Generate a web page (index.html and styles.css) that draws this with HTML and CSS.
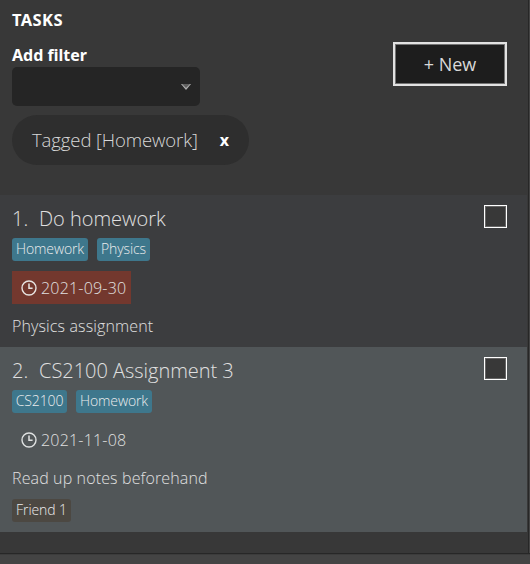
FILE: index.html
```html
<!DOCTYPE html>
<html lang="en">
<head>
<meta charset="utf-8">
<title>Tasks</title>
<link rel="stylesheet" href="styles.css">
</head>
<body>
<div class="app">
  <main class="panel">
    <header class="top">
      <div class="filters">
        <h1 class="heading main-heading">TASKS</h1>
        <div class="heading label">Add filter</div>
        <div class="combo"><svg width="10" height="6" viewBox="0 0 10 6"><path d="M0 0h10L5 6z" fill="#b0b0b0"/><path d="M1 0h8L5 4z" fill="#606060"/></svg></div>
        <div class="chip"><span class="chip-text">Tagged [Homework]</span><b class="close">x</b></div>
      </div>
      <button class="new"><span>+ New</span></button>
    </header>
    <section class="task">
      <div class="body">
        <div class="title"><span class="num">1.</span><span>Do homework</span></div>
        <div class="tags"><span class="tag w76">Homework</span><span class="tag w53">Physics</span></div>
        <div class="date overdue"><svg width="16" height="16" viewBox="0 0 16 16" fill="none" stroke="#e8e4e2"><circle cx="8" cy="8" r="7" stroke-width="1.4"/><path d="M8 3.5V8.2h3.6" stroke-width="1.5"/></svg><span>2021-09-30</span></div>
        <div class="desc">Physics assignment</div>
      </div>
      <span class="check"></span>
    </section>
    <section class="task alt">
      <div class="body">
        <div class="title"><span class="num">2.</span><span>CS2100 Assignment 3</span></div>
        <div class="tags"><span class="tag w55">CS2100</span><span class="tag w76">Homework</span></div>
        <div class="date"><svg width="16" height="16" viewBox="0 0 16 16" fill="none" stroke="#dfe1e1"><circle cx="8" cy="8" r="7" stroke-width="1.4"/><path d="M8 3.5V8.2h3.6" stroke-width="1.5"/></svg><span>2021-11-08</span></div>
        <div class="desc">Read up notes beforehand</div>
        <div class="tags people"><span class="tag friend">Friend 1</span></div>
      </div>
      <span class="check"></span>
    </section>
  </main>
  <footer class="status"></footer>
</div>
</body>
</html>
```
FILE: styles.css
```css
* { box-sizing: border-box; }
body {
  margin: 0;
  background: #383838;
  color: #e0e0e0;
  font-family: "Open Sans", sans-serif;
  font-weight: 300;
}
svg { display: block; flex: none; }
.app { width: 530px; height: 564px; display: flex; flex-direction: column; overflow: hidden; }
.panel {
  height: 553px;
  margin-right: 1px;
  border-right: 1px solid #272727;
  box-shadow: 1px 0 #444;
  padding-right: 1px;
}
.status { height: 11px; background: #444; border-top: 1px solid #272727; box-shadow: inset 0 1px #3c3c3c; }
.top { height: 195px; padding: 9px 20px 0 12px; display: flex; justify-content: space-between; align-items: flex-start; }
.heading { margin: 0; font-family: "Noto Sans", sans-serif; font-size: 16px; line-height: 22px; font-weight: 700; color: #fff; white-space: nowrap; }
.main-heading { font-size: 16.5px; letter-spacing: 0.4px; }
.label { margin-top: 13px; }
.combo {
  width: 188px; height: 39px; margin-top: 1px;
  padding-right: 9px;
  border-radius: 5px;
  background: #252525;
  display: flex; align-items: center; justify-content: flex-end;
}
.chip {
  width: 237px; height: 50px; margin-top: 9px;
  padding: 0 20px;
  border-radius: 25px;
  background: #2e2e2e;
  display: flex; align-items: center; justify-content: space-between;
  font-size: 18.5px; white-space: nowrap; color: #d8d8d8;
}
.chip-text { padding-bottom: 2px; letter-spacing: -0.1px; }
.close { font-size: 16px; font-weight: 700; color: #fff; }
.new {
  width: 114px; height: 44px; margin-top: 33px; padding: 0;
  border: 2px solid #e2e2e2;
  box-shadow: inset 0 0 0 1px #737373;
  background: #1d1d1d;
  color: #d9d9d9;
  font: 400 18px "Open Sans", sans-serif;
}
.task { height: 152px; padding: 10px 20px 0 12px; background: #3c3d3f; display: flex; justify-content: space-between; }
.alt { height: 185px; background: #515658; }
.title { display: flex; font-size: 20px; line-height: 28px; letter-spacing: -0.03px; white-space: nowrap; }
.num { width: 27px; }
.tags { display: flex; gap: 9px; margin-top: 5px; }
.tag {
  height: 23px; border-radius: 3px;
  background: #3e778c;
  color: #ececec;
  font-size: 14px; line-height: 21px; letter-spacing: -0.1px; text-align: center; white-space: nowrap;
}
.w76 { width: 76px; }
.w53 { width: 53px; }
.w55 { width: 55px; }
.friend { width: 59px; background: #4c4842; }
.date {
  width: 119px; height: 33px; margin-top: 10px; padding-left: 9px;
  display: flex; align-items: center; gap: 4px;
  font-size: 16px; letter-spacing: 0.2px; white-space: nowrap;
}
.overdue { background: #73382e; }
.desc { margin-top: 11px; font-size: 16px; line-height: 22px; letter-spacing: 0.13px; white-space: nowrap; }
.people { margin-top: 10px; }
.check {
  width: 23px; height: 23px;
  border: 1px solid #fff;
  box-shadow: inset 0 0 0 1px #656565;
  background: #383838;
}
```
